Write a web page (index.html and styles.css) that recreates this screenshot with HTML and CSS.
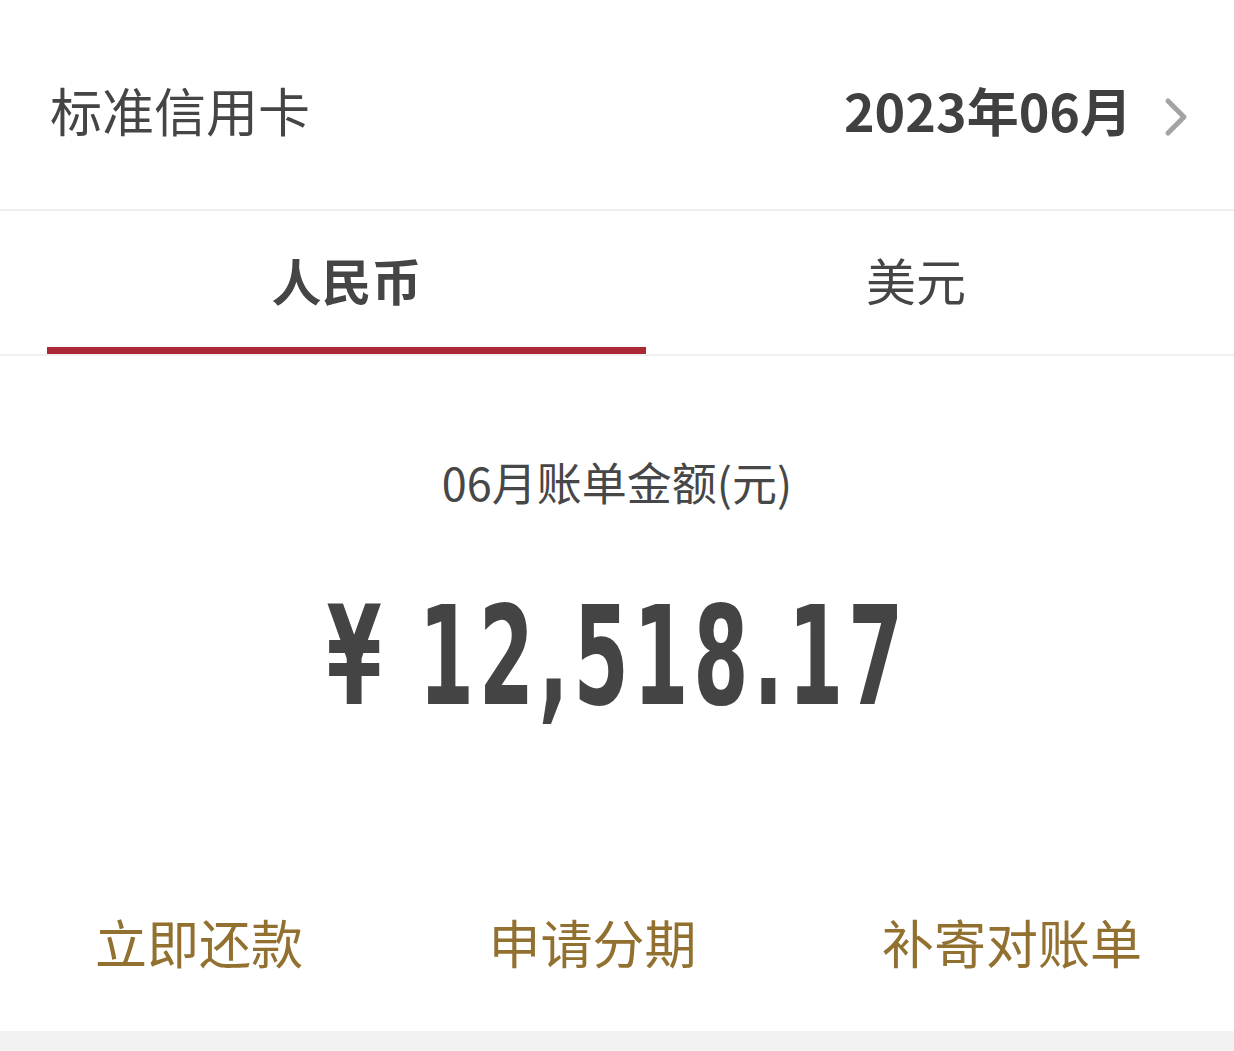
FILE: index.html
```html
<!DOCTYPE html>
<html lang="zh-CN">
<head>
    <meta charset="UTF-8">
    <meta name="viewport" content="width=device-width, initial-scale=1.0">
    <title>信用卡账单</title>
    <link rel="stylesheet" href="styles.css">
</head>
<body>
    <div class="header">
        <div class="card-name">标准信用卡</div>
        <div class="month-pick">
            <span class="month">2023年06月</span>
            <svg class="chevron" width="24" height="40" viewBox="0 0 24 40">
                <polyline points="4,4 20,20 4,36" fill="none" stroke="#a3a3a3" stroke-width="5" stroke-linecap="round" stroke-linejoin="round"/>
            </svg>
        </div>
    </div>

    <div class="tabs">
        <div class="tab active">人民币</div>
        <div class="tab">美元</div>
    </div>

    <div class="bill">
        <p class="bill-title">06月账单金额(元)</p>
        <div class="amount"><span>¥ 12,518.17</span></div>
    </div>

    <div class="actions">
        <a class="action">立即还款</a>
        <a class="action">申请分期</a>
        <a class="action">补寄对账单</a>
    </div>

    <div class="footer-gap"></div>
</body>
</html>
```

FILE: styles.css
```css
body {
    margin: 0;
    background-color: #fff;
    font-family: "Noto Sans CJK SC", "Noto Sans", sans-serif;
    color: #454545;
}
.header {
    display: flex;
    align-items: center;
    justify-content: space-between;
    padding: 10px 46px 0 50px;
    border-bottom: 2px solid #eeeeee;
    box-sizing: border-box;
    height: 211px;
}
.card-name {
    font-size: 52px;
}
.month-pick {
    display: flex;
    align-items: center;
}
.month {
    font-size: 52px;
    font-weight: bold;
    color: #404040;
}
.chevron {
    margin-left: 32px;
    margin-top: 14px;
}
.tabs {
    display: flex;
    padding: 0 48px 0 47px;
    border-bottom: 2px solid #f0f0f0;
}
.tab {
    text-align: center;
    font-size: 50px;
    height: 143px;
    line-height: 136px;
    box-sizing: border-box;
    border-bottom: 7px solid transparent;
}
.tab.active {
    width: 599px;
    font-weight: bold;
    border-bottom-color: #ab2934;
}
.tab + .tab {
    flex: 1;
}
.bill {
    text-align: center;
}
.bill-title {
    margin: 96px 0 0;
    font-size: 45px;
    line-height: 60px;
    color: #474747;
}
.amount {
    margin-top: 70px;
    height: 150px;
    line-height: 150px;
    font-family: "DejaVu Sans", sans-serif;
    font-weight: bold;
    font-size: 137px;
    color: #444;
}
.amount span {
    display: inline-block;
    transform: scaleX(0.58);
    letter-spacing: 8px;
    white-space: nowrap;
}
.actions {
    display: flex;
    justify-content: space-between;
    padding: 0 92px 0 95px;
    margin-top: 175px;
}
.action {
    font-size: 52px;
    line-height: 70px;
    color: #92702f;
}
.footer-gap {
    margin-top: 54px;
    height: 30px;
    background-color: #f2f2f2;
}
```
